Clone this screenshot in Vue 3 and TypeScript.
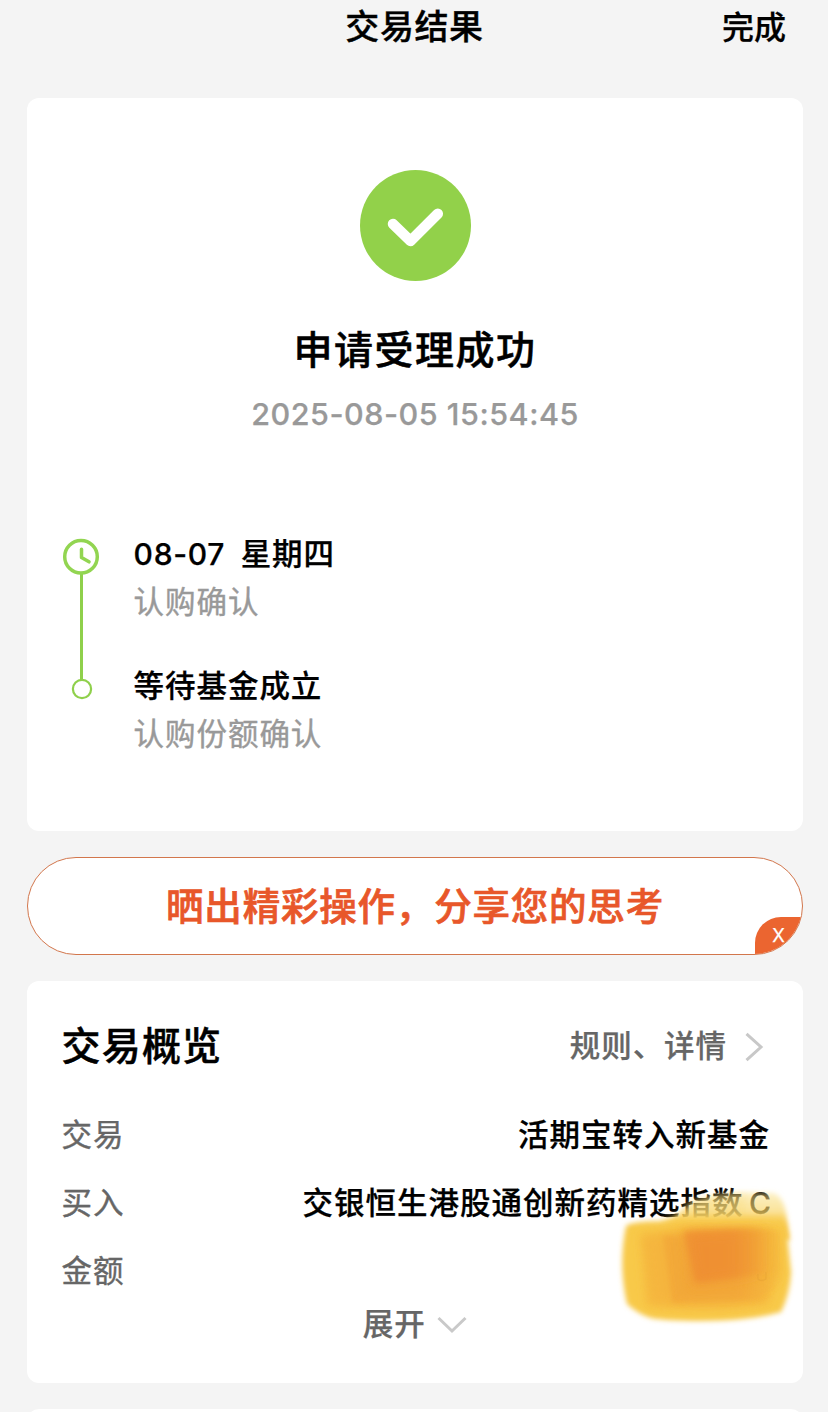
<script setup lang="ts">
interface Step {
  date?: string
  title: string
  note: string
}

interface OverviewRow {
  label: string
  value: string
  suffix?: string
}

const steps: Step[] = [
  { date: '08-07', title: '星期四', note: '认购确认' },
  { title: '等待基金成立', note: '认购份额确认' },
]

const rows: OverviewRow[] = [
  { label: '交易', value: '活期宝转入新基金' },
  { label: '买入', value: '交银恒生港股通创新药精选指数', suffix: 'C' },
  { label: '金额', value: '' },
]
</script>

<template>
  <div class="page">
    <header class="navbar">
      <h1 class="nav-title">交易结果</h1>
      <span class="nav-done">完成</span>
    </header>

    <section class="card result">
      <svg class="success" viewBox="0 0 111 111">
        <circle cx="55.5" cy="55.5" r="55.5" fill="#92d14a" />
        <path d="M33 54 L50.5 71 L77.800 43.800" fill="none" stroke="#fff" stroke-width="10.500" stroke-linecap="round" stroke-linejoin="round" />
      </svg>
      <h2 class="result-title">申请受理成功</h2>
      <p class="result-time">2025-08-05 15:54:45</p>

      <div class="timeline">
        <svg class="rail" viewBox="0 0 40 170">
          <path d="M20.500 40 V146" stroke="#8fd04b" stroke-width="3" />
          <circle cx="20" cy="22.700" r="16.300" fill="#fff" stroke="#92d551" stroke-width="3.500" />
          <path d="M20.500 15.200 V23.500 L28 27.800" fill="none" stroke="#92d551" stroke-width="3.500" stroke-linecap="round" stroke-linejoin="round" />
          <circle cx="21" cy="155" r="9.100" fill="#fff" stroke="#8fd04b" stroke-width="2.200" />
        </svg>
        <div class="steps">
          <div v-for="s in steps" :key="s.title" class="step">
            <div class="step-title"><span v-if="s.date" class="step-date">{{ s.date }}</span>{{ s.title }}</div>
            <div class="step-note">{{ s.note }}</div>
          </div>
        </div>
      </div>
    </section>

    <section class="banner">
      <span class="banner-text">晒出精彩操作，分享您的思考</span>
      <span class="banner-close">X</span>
    </section>

    <section class="card overview">
      <div class="overview-head">
        <h3 class="overview-title">交易概览</h3>
        <span class="detail">规则、详情</span>
        <svg class="chevron-right" viewBox="0 0 20 30">
          <path d="M2.500 1.800 L17 15 L2.500 28.200" fill="none" stroke="#c8c8c8" stroke-width="3" />
        </svg>
      </div>
      <div v-for="r in rows" :key="r.label" class="row">
        <span class="label">{{ r.label }}</span>
        <span class="value">{{ r.value }}<span v-if="r.suffix" class="suffix">{{ r.suffix }}</span></span>
      </div>
      <div class="expand">
        <span>展开</span>
        <svg class="chevron-down" viewBox="0 0 30 18">
          <path d="M1.500 2 L15 15 L28.500 2" fill="none" stroke="#c9c9c9" stroke-width="3" />
        </svg>
      </div>

      <svg class="smudge" viewBox="0 0 210 160">
        <defs>
          <filter id="edge" x="-20%" y="-20%" width="140%" height="140%"><feGaussianBlur stdDeviation="2.500" /></filter>
          <filter id="soft" x="-20%" y="-20%" width="140%" height="140%"><feGaussianBlur stdDeviation="4" /></filter>
          <filter id="wide" x="-30%" y="-30%" width="160%" height="160%"><feGaussianBlur stdDeviation="6" /></filter>
          <linearGradient id="veil" gradientUnits="userSpaceOnUse" x1="0" y1="10" x2="0" y2="46">
            <stop offset="0" stop-color="#fbe492" stop-opacity="0.450" />
            <stop offset="0.350" stop-color="#f9db78" stop-opacity="0.600" />
            <stop offset="0.750" stop-color="#f9d261" stop-opacity="0.720" />
            <stop offset="1" stop-color="#f7c649" stop-opacity="0.950" />
          </linearGradient>
          <linearGradient id="body" gradientUnits="userSpaceOnUse" x1="0" y1="32" x2="0" y2="48">
            <stop offset="0" stop-color="#f9d05a" stop-opacity="0.200" />
            <stop offset="0.600" stop-color="#f8cb4e" stop-opacity="0.950" />
            <stop offset="1" stop-color="#f8c94a" />
          </linearGradient>
          <linearGradient id="fade" gradientUnits="userSpaceOnUse" x1="130" y1="0" x2="180" y2="0">
            <stop offset="0" stop-color="#f2a538" />
            <stop offset="1" stop-color="#f5b93e" stop-opacity="0" />
          </linearGradient>
          <linearGradient id="core" gradientUnits="userSpaceOnUse" x1="75" y1="0" x2="170" y2="0">
            <stop offset="0" stop-color="#ef8c31" />
            <stop offset="0.500" stop-color="#ef8f32" />
            <stop offset="1" stop-color="#f2a035" stop-opacity="0" />
          </linearGradient>
        </defs>
        <path d="M56 50 Q62 38 74 28 Q96 13 132 12 L164 13 Q175 18 177 40 L180 60 L56 60 Z" fill="url(#veil)" filter="url(#edge)" />
        <path d="M74 50 L78 20 L136 16 L136 50 Z" fill="#f9da78" opacity="0.350" filter="url(#soft)" />
        <path d="M16 46 Q22 41 50 41 Q62 36 76 34 L174 34 Q178 62 181 92 Q180 114 171 132 Q140 141 92 141 Q55 141 41 138 Q28 134 17 124 Q8 85 16 46 Z" fill="url(#body)" filter="url(#edge)" />
        <path d="M30 54 L70 48 L168 50 L170 90 L158 124 Q100 134 36 126 Z" fill="#f6bb41" filter="url(#soft)" />
        <path d="M34 58 L80 50 L150 50 L156 120 Q100 130 42 122 Z" fill="#f5b23d" opacity="0.600" filter="url(#soft)" />
        <path d="M53 56 L180 50 L180 96 L148 120 L62 123 Z" fill="url(#fade)" opacity="0.700" filter="url(#edge)" />
        <path d="M72 50 L164 48 L160 104 L134 114 L74 114 Z" fill="url(#fade)" opacity="0.650" filter="url(#wide)" />
        <path d="M74 52 L166 48 L166 92 L128 97 L86 102 Z" fill="url(#core)" opacity="0.550" filter="url(#edge)" />
        <path d="M78 54 L150 50 L150 94 L84 104 Z" fill="url(#core)" opacity="0.750" filter="url(#wide)" />
        <path d="M148 94 v5 q3 3 8 0 v-7" fill="none" stroke="#d9942f" stroke-width="1.300" opacity="0.250" />
      </svg>
    </section>

    <section class="card next"></section>
  </div>
</template>

<style>
html,
body {
  background: #f4f4f4;
}
body {
  margin: 0;
  overflow: hidden;
}
</style>

<style scoped>
.page {
  box-sizing: border-box;
  width: 828px;
  height: 1412px;
  padding: 0 25px 0 27px;
  overflow: hidden;
  background: #f4f4f4;
  color: #000;
  font-family: Inter, 'Noto Sans CJK SC', sans-serif;
  font-weight: 500;
  -webkit-text-stroke: 0.25px currentColor;
}
h1,
h2,
h3,
p {
  margin: 0;
}
.navbar {
  display: grid;
  grid-template-columns: 1fr auto 1fr;
  height: 98px;
  align-items: start;
}
.nav-title {
  grid-column: 2;
  margin-left: -1px;
  font-size: 34px;
  font-weight: 500;
  line-height: 54px;
  letter-spacing: 0.6px;
  -webkit-text-stroke-width: 0.4px;
}
.nav-done {
  justify-self: end;
  padding-right: 17px;
  font-size: 32px;
  line-height: 56px;
}
.card {
  position: relative;
  box-sizing: border-box;
  border-radius: 12px;
  background: #fff;
}
.result {
  display: flex;
  flex-direction: column;
  align-items: center;
  height: 733px;
  padding-top: 72px;
}
.success {
  width: 111px;
  height: 111px;
}
.result-title {
  margin-top: 42px;
  font-size: 39px;
  font-weight: 500;
  line-height: 54px;
  letter-spacing: 1.5px;
  -webkit-text-stroke-width: 0.5px;
}
.result-time {
  margin-top: 17px;
  color: #999;
  font-size: 30.5px;
  font-weight: 500;
  line-height: 40px;
  letter-spacing: 0.53px;
}
.timeline {
  display: flex;
  align-self: stretch;
  gap: 32.6px;
  margin-top: 100px;
  padding-left: 34px;
}
.rail {
  width: 40px;
  height: 170px;
}
.steps {
  display: flex;
  flex-direction: column;
  gap: 44px;
}
.step-title,
.step-note {
  font-size: 30.5px;
  line-height: 40px;
  letter-spacing: 0.95px;
  white-space: nowrap;
}
.step-date {
  margin-right: 15.5px;
  font-size: 30px;
  letter-spacing: 0.7px;
}
.step-note {
  margin-top: 8px;
  color: #999;
  font-weight: 400;
  -webkit-text-stroke-width: 0.4px;
}
.banner {
  position: relative;
  display: flex;
  box-sizing: border-box;
  align-items: center;
  justify-content: center;
  height: 98px;
  margin: 26px 0;
  overflow: hidden;
  border: 1px solid #d2764c;
  border-radius: 49px;
  background: #fff;
}
.banner-text {
  margin-top: 1px;
  color: #e8572a;
  font-size: 37.5px;
  line-height: 56px;
  letter-spacing: 0.8px;
  -webkit-text-stroke-width: 0.7px;
}
.banner-close {
  position: absolute;
  right: 0;
  bottom: 0;
  width: 47px;
  height: 37px;
  border-radius: 26px 0 0 0;
  background: #eb6530;
  color: #fff;
  font-size: 18.5px;
  font-weight: 400;
  line-height: 37px;
  text-align: center;
}
.overview {
  height: 402px;
  padding: 31px 33px 0 34.5px;
}
.overview-head {
  display: flex;
  align-items: center;
  height: 68px;
  margin-bottom: 20px;
}
.overview-title {
  flex: 1;
  font-size: 39px;
  font-weight: 500;
  line-height: 68px;
  letter-spacing: 1.2px;
  -webkit-text-stroke-width: 0.5px;
}
.detail {
  color: #666;
  font-size: 30.5px;
  line-height: 68px;
  letter-spacing: 0.95px;
}
.chevron-right {
  width: 20px;
  height: 30px;
  margin: 2px 6px 0 17px;
}
.row {
  display: flex;
  justify-content: space-between;
  height: 68px;
  font-size: 30.5px;
  line-height: 69px;
  letter-spacing: 1px;
  white-space: nowrap;
}
.label {
  color: #666;
  font-weight: 400;
  -webkit-text-stroke-width: 0.4px;
}
.suffix {
  margin-right: -2px;
  margin-left: 5.5px;
  font-size: 30px;
}
.expand {
  display: flex;
  align-items: center;
  justify-content: center;
  gap: 11px;
  height: 40px;
  margin-right: 2px;
  color: #666;
  font-size: 30.5px;
  line-height: 40px;
  letter-spacing: 0.9px;
}
.chevron-down {
  width: 30px;
  height: 18px;
  margin-top: 2px;
}
.smudge {
  position: absolute;
  top: 199px;
  left: 583px;
  width: 210px;
  height: 160px;
}
.next {
  height: 40px;
  margin-top: 26px;
}
</style>
